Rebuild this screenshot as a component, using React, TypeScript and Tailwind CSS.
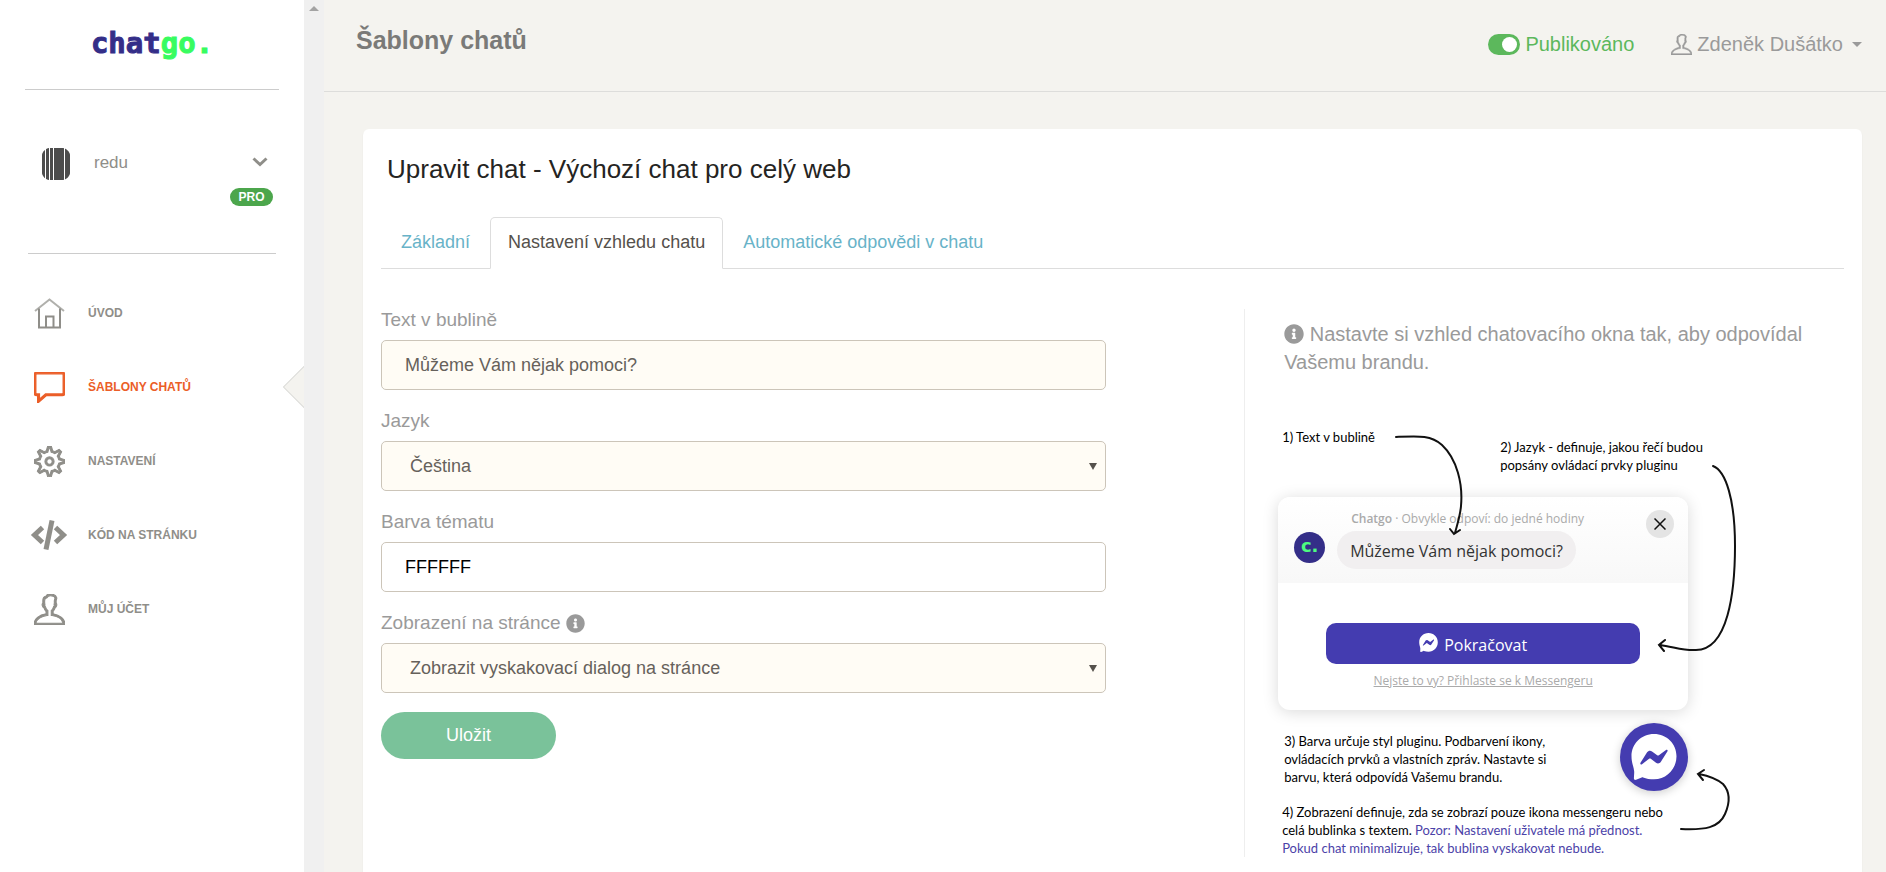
import { useState } from "react"
import type { ReactNode } from "react"
import { FaInfoCircle } from "react-icons/fa"
import { TfiComment, TfiSettings, TfiUser } from "react-icons/tfi"

const HomeIcon = () => (
    <svg viewBox="0 0 31 31" className="w-[31px] h-[31px]" fill="none" stroke="currentColor" strokeWidth="2">
        <path d="M1 13L15.500 1.500 30 13" strokeOpacity="0.700" />
        <path d="M5 10.500V29.500H26V10.500" />
        <path d="M12 29V18.500h7.500V29" />
    </svg>
)

const CodeIcon = () => (
    <svg viewBox="0 0 38 32" className="w-[38px] h-8 -ml-1" fill="none" stroke="currentColor" strokeWidth="5">
        <path d="M12.500 8.500L4.500 16l8 7.500" />
        <path d="M25.500 8.500l8 7.500-8 7.500" />
        <path d="M22 1.500L16 30.500" />
    </svg>
)

const MessengerIcon = ({ className, bolt }: { className: string; bolt: string }) => (
    <svg viewBox="0 0 46 46" className={className}>
        <path fill="#fff" d="M23 0C10.200 0 .500 9.800.500 22.300c0 6.500 2 10 2.500 13.900.2.900.2 1.500.2 2.500l-.3 5.600c0 1.300 1 2 2.200 1.500l5.600-2.400c.5-.2.900-.2 1.400 0 3.200 1.200 6.900 1.900 10.900 1.900 12.800 0 22.500-10.500 22.500-23S35.800 0 23 0z" />
        <path fill={bolt} d="M9.500 28.800l6.600-10.500c1.100-1.700 3.300-2.100 4.900-.9l5.200 3.900c.5.400 1.200.4 1.700 0l7.100-5.400c.9-.7 2.200.4 1.500 1.400l-6.600 10.500c-1.100 1.700-3.300 2.100-4.900.9l-5.200-3.900c-.5-.4-1.200-.4-1.700 0L11 30.200c-.9.700-2.200-.4-1.500-1.400z" />
    </svg>
)

const navItems = [
    { label: "ÚVOD", icon: <HomeIcon /> },
    { label: "ŠABLONY CHATŮ", icon: <TfiComment className="w-[31px] h-[31px] stroke-current stroke-[0.7px]" />, active: true },
    { label: "NASTAVENÍ", icon: <TfiSettings className="w-[31px] h-[31px] stroke-current stroke-[0.6px]" /> },
    { label: "KÓD NA STRÁNKU", icon: <CodeIcon /> },
    { label: "MŮJ ÚČET", icon: <TfiUser className="w-[31px] h-[31px] stroke-current stroke-[0.6px]" /> },
]

const tabs = ["Základní", "Nastavení vzhledu chatu", "Automatické odpovědi v chatu"]

function Sidebar() {
    return (
        <aside className="w-[304px] shrink-0 bg-white">
            <div className="h-[90px] mx-[25px] border-b border-[#ccc] flex justify-center pt-[25px]">
                <a href="#" className="font-['DejaVu_Sans_Mono',monospace] font-bold text-[29px] leading-[36px] text-[#342e88] [-webkit-text-stroke:1px]">
                    chat<span className="text-[#38fc60]">go.</span>
                </a>
            </div>

            <div className="h-[164px] mx-7 border-b border-[#ccc] pt-[58px]">
                <button className="w-full flex items-center pl-[14px] pr-2 text-[#8f8e89]">
                    <svg viewBox="0 0 28 32" className="w-7 h-8">
                        <path fill="#4d4d4d" d="M7 0h14c3 0 7 4 7 7v18c0 3-4 7-7 7H7c-3 0-7-4-7-7V7c0-3 4-7 7-7z" />
                        <path stroke="#fff" d="M3.500 0v32M7.500 0v32M11.500 0v32M22.500 0v32" />
                    </svg>
                    <span className="ml-6 pb-[2px] text-[17px]">redu</span>
                    <svg viewBox="0 0 16 14" className="w-4 h-[14px] ml-auto" fill="none" stroke="currentColor" strokeWidth="3">
                        <path d="M1.500 1.500L8 7.500l6.500-6" />
                    </svg>
                </button>
                <div className="flex justify-end pr-[3px] pt-2">
                    <span className="w-[43px] h-[18px] rounded-full bg-[#4ca64c] text-white text-[12px] leading-[19px] font-bold text-center">PRO</span>
                </div>
            </div>

            <nav className="pt-[22px]">
                {navItems.map((item) => (
                    <a
                        key={item.label}
                        href="#"
                        className={`relative overflow-hidden flex items-center h-[74px] pl-[34px] text-[12px] font-bold ${item.active ? "text-[#eb5e28]" : "text-[#8f8e89]"}`}
                    >
                        <span className="w-[54px]">{item.icon}</span>
                        {item.label}
                        {item.active && (
                            <span className="absolute -right-[15px] top-[22px] w-[30px] h-[30px] rotate-45 bg-[#f4f3ef] border border-[#dddddb]" />
                        )}
                    </a>
                ))}
            </nav>
        </aside>
    )
}

function Header() {
    const [published, setPublished] = useState(true)

    return (
        <header className="h-[92px] shrink-0 border-b border-[#dddddb] flex items-start justify-between pl-8 pr-6 pt-5">
            <h1 className="text-[25px] leading-[40px] font-bold text-[#7a7a78]">Šablony chatů</h1>
            <div className="flex items-center h-12 text-[20px]">
                <label className="flex items-center gap-[5px] text-[#5cb85c]">
                    <input
                        type="checkbox"
                        checked={published}
                        onChange={(e) => setPublished(e.target.checked)}
                        className="appearance-none w-8 h-[21px] rounded-full bg-[#bbb] p-[3px] flex checked:justify-end checked:bg-[#5cb85c] before:w-[15px] before:h-[15px] before:rounded-full before:bg-white"
                    />
                    Publikováno
                </label>
                <button className="flex items-center ml-[37px] text-[#9a9a9a]">
                    <TfiUser className="w-[21px] h-[21px] stroke-current stroke-[0.5px]" />
                    <span className="ml-[5px]">Zdeněk Dušátko</span>
                    <span className="ml-[9px] border-x-5 border-x-transparent border-t-5 border-t-current" />
                </button>
            </div>
        </header>
    )
}

function Field({ id, label, children }: { id: string; label: ReactNode; children: ReactNode }) {
    return (
        <div className="pb-4">
            <label htmlFor={id} className="flex items-center gap-[5px] h-[35px] pb-1 text-[19px] text-[#9a9a9a]">{label}</label>
            {children}
        </div>
    )
}

function SelectBox({ id, value }: { id: string; value: string }) {
    return (
        <div className="relative">
            <select id={id} className="appearance-none w-full h-[50px] px-7 rounded-[5px] border border-[#ccc5b9] bg-[#fffcf5] text-[18px] text-[#66615b]">
                <option>{value}</option>
            </select>
            <span className="pointer-events-none absolute right-[9px] top-[22px] border-x-4 border-x-transparent border-t-7 border-t-[#55514c]" />
        </div>
    )
}

function ChatForm() {
    const [text, setText] = useState("Můžeme Vám nějak pomoci?")
    const [color, setColor] = useState("FFFFFF")

    return (
        <form className="w-[84%]" onSubmit={(e) => e.preventDefault()}>
            <Field id="bubble" label="Text v bublině">
                <input id="bubble" value={text} onChange={(e) => setText(e.target.value)} className="block w-full h-[50px] px-[23px] rounded-[5px] border border-[#ccc5b9] bg-[#fffcf5] text-[18px] text-[#66615b]" />
            </Field>
            <Field id="language" label="Jazyk">
                <SelectBox id="language" value="Čeština" />
            </Field>
            <Field id="color" label="Barva tématu">
                <input id="color" value={color} onChange={(e) => setColor(e.target.value)} className="block w-full h-[50px] px-[23px] rounded-[5px] border border-[#ccc5b9] bg-white text-[18px] text-black" />
            </Field>
            <Field id="display" label={<>Zobrazení na stránce <FaInfoCircle className="w-[19px] h-[19px]" /></>}>
                <SelectBox id="display" value="Zobrazit vyskakovací dialog na stránce" />
            </Field>
            <button type="submit" className="mt-[3px] w-[175px] h-[47px] rounded-full bg-[#7ac29a] text-white text-[18px]">Uložit</button>
        </form>
    )
}

// Preview of the chat plugin with numbered notes pointing at its parts
function PluginGuide() {
    return (
        <div className="relative w-[410px] mt-[52px] font-['Lato',sans-serif] text-[13px] leading-[18px] text-black whitespace-nowrap">
            <div className="flex">
                <p className="w-[222px] shrink-0 pl-1">1) Text v bublině</p>
                <p className="pt-[10px]">2) Jazyk - definuje, jakou řečí budou<br />popsány ovládací prvky pluginu</p>
            </div>

            <div className="mt-[23px] rounded-xl bg-white shadow-[0_2px_16px_rgba(0,0,0,0.15)] overflow-hidden font-['Open_Sans',sans-serif]">
                <div className="flex items-start h-[86px] pl-4 pr-[14px] pt-[13px] bg-linear-to-b from-white to-[#f8f8f8]">
                    <span className="mt-[22px] w-[31px] h-[31px] rounded-full bg-[#342e88] text-[#4dfc80] text-center font-['DejaVu_Sans',sans-serif] font-bold text-[18px] leading-[27px]">c.</span>
                    <div className="ml-3">
                        <p className="pl-[14px] text-[12px] text-[#aaa]"><span className="font-semibold">Chatgo</span> · Obvykle odpoví: do jedné hodiny</p>
                        <p className="mt-[3px] w-fit h-[38px] px-[13px] rounded-full bg-[#f1eff0] text-[16px] leading-[40px] text-[#333]">Můžeme Vám nějak pomoci?</p>
                    </div>
                    <button aria-label="Zavřít" className="ml-auto w-7 h-7 rounded-full bg-[#e4e4e4] flex items-center justify-center">
                        <svg viewBox="0 0 12 12" className="w-3 h-3" stroke="#111" strokeWidth="1.500">
                            <path d="M.5.500l11 11M11.500.500l-11 11" />
                        </svg>
                    </button>
                </div>
                <div className="pt-10 px-12 pb-5 text-center">
                    <button className="w-full h-[41px] pt-[2px] pr-5 rounded-[10px] bg-[#443cb0] text-white text-[16px] flex items-center justify-center gap-[6px]">
                        <MessengerIcon className="w-[19px] h-[19px] mb-1" bolt="#443cb0" />
                        Pokračovat
                    </button>
                    <a href="#" className="block mt-2 text-[12px] text-[#aaa] underline">Nejste to vy? Přihlaste se k Messengeru</a>
                </div>
            </div>

            <div className="flex justify-between mt-[13px] pl-[6px]">
                <p className="pt-[9px]">3) Barva určuje styl pluginu. Podbarvení ikony,<br />ovládacích prvků a vlastních zpráv. Nastavte si<br />barvu, která odpovídá Vašemu brandu.</p>
                <span className="w-[68px] h-[68px] rounded-full bg-[#443cb0] shadow-[0_2px_10px_rgba(0,0,0,0.2)] flex items-center justify-center">
                    <MessengerIcon className="w-[46px] h-[46px]" bolt="#443cb0" />
                </span>
            </div>
            <p className="mt-3 pl-1">
                4) Zobrazení definuje, zda se zobrazí pouze ikona messengeru nebo<br />
                celá bublinka s textem. <span className="text-[#4b42a8]">Pozor: Nastavení uživatele má přednost.<br />Pokud chat minimalizuje, tak bublina vyskakovat nebude.</span>
            </p>

            <svg viewBox="0 0 470 430" className="absolute left-0 top-0 w-[470px] h-[430px] max-w-none pointer-events-none" fill="none" stroke="#111" strokeWidth="2" strokeLinecap="round">
                <path d="M118 9C141 8 153 7 164 17C179 31 185 56 183 78C182 89 179 97 177 105M172 101l4 5 6-4" />
                <path d="M435 38C448 43 457 72 457 118C457 164 450 222 418 222C407 223 396 219 382 217M387 212l-6 5 5 6" />
                <path d="M403 401C427 402 441 400 447 386C451 377 454 366 445 356C439 351 431 348 421 346M426 342l-6 4 5 6" />
            </svg>
        </div>
    )
}

export default function App() {
    const [tab, setTab] = useState(tabs[1])

    return (
        <div className="flex min-h-screen bg-[#f4f3ef] font-['Liberation_Sans',Arial,sans-serif]">
            <Sidebar />
            <div className="w-5 shrink-0 bg-[#f0f0f0] flex items-start justify-center pt-[6px]">
                <span className="border-x-5 border-x-transparent border-b-5 border-b-[#a3a3a3]" />
            </div>

            <div className="flex-1 min-w-0 flex flex-col">
                <Header />
                <main className="flex-1 flex flex-col pl-[39px] pr-6 pt-[37px]">
                    <section className="flex-1 px-[18px] bg-white rounded-t-md shadow-[0_1px_1px_rgba(0,0,0,0.15)]">
                        <h2 className="pt-5 pl-[6px] text-[26px] leading-[40px] text-[#252422]">Upravit chat - Výchozí chat pro celý web</h2>

                        <div role="tablist" className="flex gap-[2px] mt-7 pl-[2px] border-b border-[#ddd] text-[18px]">
                            {tabs.map((name) => (
                                <button
                                    key={name}
                                    role="tab"
                                    aria-selected={tab === name}
                                    onClick={() => setTab(name)}
                                    className={`h-[52px] -mb-px px-[17px] pb-[2px] rounded-t-[5px] border ${tab === name ? "border-[#ddd] border-b-white bg-white text-[#55514c]" : "border-transparent text-[#68b3c8]"}`}
                                >
                                    {name}
                                </button>
                            ))}
                        </div>

                        <div className="flex pt-9">
                            <div className="w-[59%]">
                                <ChatForm />
                            </div>
                            <div className="flex-1 min-w-0 mt-1 border-l border-[#eee] pl-[33px] pt-[11px]">
                                <p className="pl-[6px] text-[20px] leading-[28px] text-[#9a9a9a]">
                                    <FaInfoCircle className="inline w-5 h-5 mb-1" /> Nastavte si vzhled chatovacího okna tak, aby odpovídal Vašemu brandu.
                                </p>
                                <PluginGuide />
                            </div>
                        </div>
                    </section>
                </main>
            </div>
        </div>
    )
}
